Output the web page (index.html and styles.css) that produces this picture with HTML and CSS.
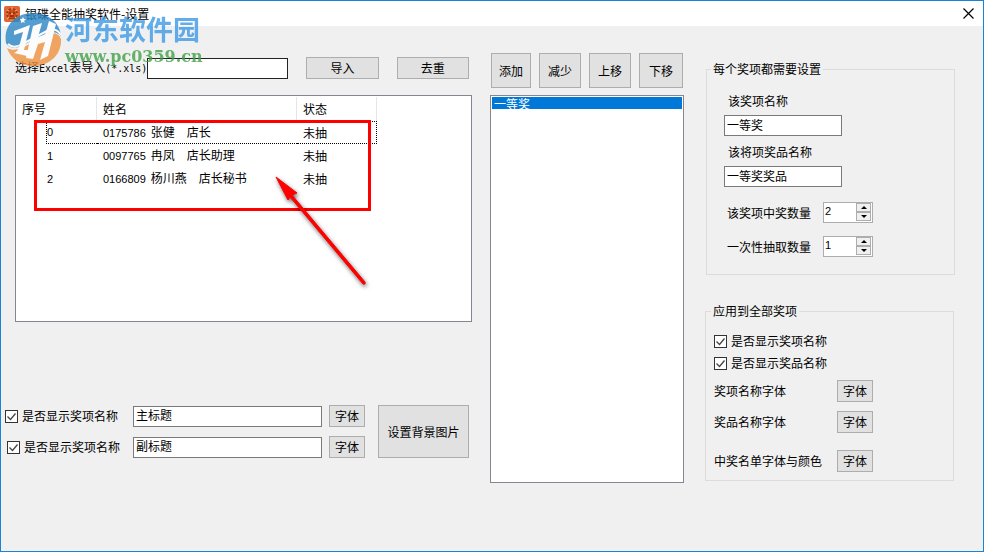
FILE: index.html
```html
<!DOCTYPE html>
<html lang="zh-CN">
  <head>
    <meta charset="UTF-8" />
    <meta name="viewport" content="width=device-width, initial-scale=1.0" />
    <title>银碟全能抽奖软件-设置</title>
    <link rel="stylesheet" href="styles.css">
  </head>
  <body>
    <div class="window">
      <header class="titlebar">
        <svg class="app-icon" viewBox="0 0 16 16" aria-hidden="true">
          <rect width="16" height="16" rx="2" fill="#e2643a" />
          <circle cx="8" cy="8" r="6" fill="#a03a18" />
          <circle cx="8" cy="8" r="4" fill="#d9481c" />
          <path d="M3 4l2 1M13 4l-2 1M2 8h2M12 8h2M3 13l2-2M13 13l-2-2M8 1v3M6 14h4" stroke="#f6b04c" stroke-width="1.2" />
          <path d="M5 7h2M9 7h2M6 10h4" stroke="#5b2410" stroke-width="1.2" />
          <path d="M8 7v2" stroke="#ffd27a" />
        </svg>
        <h1>银碟全能抽奖软件-设置</h1>
        <button class="close" type="button" aria-label="关闭">
          <svg viewBox="0 0 11 11" aria-hidden="true">
            <path d="M.5 .5l10 10M10.5 .5l-10 10" stroke="#000" stroke-width="1.2" />
          </svg>
        </button>
      </header>

      <div class="watermark">
        <svg class="watermark-logo" viewBox="0 0 57 54" aria-hidden="true">
          <path d="M1 31C-2 13 11 1 28 1c16 0 27 10 28 23-4-4-9-5-14-3L14 35C8 37 3 35 1 31z" fill="#2b87c8" />
          <path d="M2 36c5 3 11 2 17-1l22-12c7-3 13-2 15 4 1 15-11 27-28 27C16 54 6 47 2 36z" fill="#f0923f" />
          <path d="M9 19l16-6-6 25h5l-2 6-13-3c3-1 4-3 5-6l4-15-9 3z" fill="#fff" />
          <path d="M28 14l9-3-4 14 7-2 4-14 7 3-8 32-8 4 5-18-7 2-5 15-7-1z" fill="#fff" />
          <path d="M3 32c5 5 11 2 16-1l23-12c6-3 11-1 14 4" fill="none" stroke="#fff" stroke-width="2" />
          <path d="M18 5l1 2h2l-2 2 1 2-2-1-2 1v-2l-1-2h2z" fill="#fff" />
        </svg>
        <div class="watermark-text">
          <span class="watermark-name">河东软件园</span>
          <span class="watermark-url">www.pc0359.cn</span>
        </div>
      </div>

      <main class="content">
        <section class="people">
          <div class="import-row">
            <label for="file">选择<span class="mono">Excel</span>表导入<span class="mono">(*.xls)</span></label>
            <input id="file" class="file" type="text">
            <button type="button">导入</button>
            <button type="button">去重</button>
          </div>

          <div class="list">
            <table>
              <thead>
                <tr>
                  <th class="col-no">序号</th>
                  <th class="col-name">姓名</th>
                  <th class="col-state">状态</th>
                </tr>
              </thead>
              <tbody>
                <tr class="focused">
                  <td><span class="num">0</span></td>
                  <td><span class="num">0175786</span>张健　店长</td>
                  <td>未抽</td>
                </tr>
                <tr>
                  <td><span class="num">1</span></td>
                  <td><span class="num">0097765</span>冉凤　店长助理</td>
                  <td>未抽</td>
                </tr>
                <tr>
                  <td><span class="num">2</span></td>
                  <td><span class="num">0166809</span>杨川燕　店长秘书</td>
                  <td>未抽</td>
                </tr>
              </tbody>
            </table>
            <div class="mark-box"></div>
            <svg class="mark-arrow" viewBox="0 0 100 120" aria-hidden="true">
              <path d="M4 4L25 20L20 22L93 109Q94 112 91 111L18 24L16 27z" fill="#f00" stroke="#f00" />
            </svg>
          </div>

          <div class="titles">
            <label class="check"><input type="checkbox" checked>是否显示奖项名称</label>
            <input type="text" value="主标题" aria-label="主标题">
            <button type="button">字体</button>
            <label class="check second"><input type="checkbox" checked>是否显示奖项名称</label>
            <input type="text" value="副标题" aria-label="副标题">
            <button type="button">字体</button>
            <button class="background" type="button">设置背景图片</button>
          </div>
        </section>

        <section class="prizes">
          <div class="prize-buttons">
            <button type="button">添加</button>
            <button type="button">减少</button>
            <button type="button">上移</button>
            <button type="button">下移</button>
          </div>
          <select class="prize-list" size="20" aria-label="奖项">
            <option selected>一等奖</option>
          </select>
        </section>

        <section class="settings">
          <fieldset class="each">
            <legend>每个奖项都需要设置</legend>
            <div class="field">
              <label for="prize">该奖项名称</label>
              <input id="prize" type="text" value="一等奖">
            </div>
            <div class="field">
              <label for="gift">该将项奖品名称</label>
              <input id="gift" type="text" value="一等奖奖品">
            </div>
            <div class="counts">
              <label for="total">该奖项中奖数量</label>
              <div class="spin">
                <input id="total" type="number" value="2">
                <div class="spin-buttons">
                  <button class="up" type="button" aria-label="增加"></button>
                  <button class="down" type="button" aria-label="减少"></button>
                </div>
              </div>
              <label for="once">一次性抽取数量</label>
              <div class="spin">
                <input id="once" type="number" value="1">
                <div class="spin-buttons">
                  <button class="up" type="button" aria-label="增加"></button>
                  <button class="down" type="button" aria-label="减少"></button>
                </div>
              </div>
            </div>
          </fieldset>

          <fieldset class="all">
            <legend>应用到全部奖项</legend>
            <label class="check"><input type="checkbox" checked>是否显示奖项名称</label>
            <label class="check"><input type="checkbox" checked>是否显示奖品名称</label>
            <div class="fonts">
              <span>奖项名称字体</span>
              <button type="button">字体</button>
              <span>奖品名称字体</span>
              <button type="button">字体</button>
            </div>
            <div class="fonts">
              <span>中奖名单字体与颜色</span>
              <button type="button">字体</button>
            </div>
          </fieldset>
        </section>
      </main>
    </div>
  </body>
</html>
```

FILE: styles.css
```css
* {
  box-sizing: border-box;
}
body {
  margin: 0;
  color: #000;
  font: normal 12px/14px "Noto Sans CJK SC", sans-serif;
}
button,
input,
select {
  margin: 0;
  color: #000;
  font: inherit;
}
button {
  padding: 0;
  border: 1px solid #adadad;
  background: #e1e1e1;
}
input[type="text"] {
  min-width: 0;
  height: 21px;
  padding: 0 2px 3px;
  border: 1px solid #7a7a7a;
  background: #fff;
}
.window {
  position: relative;
  min-height: 100vh;
  border: 1px solid #1883d7;
  background: #f0f0f0;
}

/* Title bar */
.titlebar {
  display: flex;
  align-items: center;
  height: 25px;
  padding: 0 9px 0 3px;
  background: #fff;
}
.titlebar h1 {
  flex: 1;
  margin: 0 0 0 5px;
  font-size: 12px;
  font-weight: normal;
}
.app-icon {
  width: 16px;
  height: 16px;
}
.close {
  display: flex;
  border: 0;
  background: none;
}
.close svg {
  width: 11px;
  height: 11px;
}

/* Watermark */
.watermark {
  position: absolute;
  top: 11px;
  left: 4px;
  display: flex;
  gap: 3px;
  opacity: 0.8;
  pointer-events: none;
}
.watermark-logo {
  width: 57px;
  height: 54px;
}
.watermark-text {
  display: flex;
  flex-direction: column;
}
.watermark-name {
  color: #3d9be6;
  font-size: 27px;
  font-weight: bold;
  line-height: 34px;
}
.watermark-url {
  color: #43a047;
  font: bold 16px/22px "DejaVu Serif", serif;
}

/* Columns */
.content {
  display: grid;
  grid-template-columns: 467fr 194fr 253fr;
  gap: 18px;
  align-items: start;
  padding: 27px 28px 20px 4px;
}

/* People */
.import-row {
  display: flex;
  align-items: center;
  gap: 18px;
  padding: 4px 3px 0 10px;
}
.import-row label {
  margin-right: -18px;
  white-space: nowrap;
}
.import-row .file {
  flex: 140;
  border-color: #222;
}
.import-row button {
  flex: 73;
  height: 22px;
}
.mono {
  font: 10px/14px "DejaVu Sans Mono", monospace;
}
.list {
  position: relative;
  height: 227px;
  margin: 16px 0 83px 10px;
  padding-top: 1px;
  border: 1px solid #828790;
  background: #fff;
}
.list table {
  table-layout: fixed;
  border-collapse: separate;
  border-spacing: 0;
  width: 361px;
}
.list th,
.list td {
  height: 23px;
  padding: 0 0 0 6px;
  font-weight: normal;
  text-align: left;
  white-space: nowrap;
}
.list th {
  height: 24px;
  border-right: 1px solid #e5e5e5;
}
.list td:first-child {
  padding-left: 31px;
}
.list .focused td {
  border-top: 1px dotted #000;
  border-bottom: 1px dotted #000;
}
.list .focused td:first-child {
  border: 0;
  padding-left: 30px;
}
.list .focused td:first-child .num {
  display: block;
  border: 1px dotted #000;
  border-right: 0;
  line-height: 21px;
}
.list .focused td:last-child {
  border-right: 1px dotted #000;
}
.col-no {
  width: 81px;
}
.col-name {
  width: 200px;
}
.col-state {
  width: 80px;
}
.num {
  margin-right: 5px;
  font: 11px/14px "Liberation Sans", sans-serif;
}
td:first-child .num {
  margin-right: 0;
}
.mark-box {
  position: absolute;
  top: 24px;
  left: 18px;
  width: 337px;
  height: 91px;
  border: 3px solid #f00;
}
.mark-arrow {
  position: absolute;
  top: 77px;
  left: 256px;
  width: 100px;
  height: 120px;
  filter: drop-shadow(1px 2px 2px rgba(0, 0, 0, 0.6));
}
.titles {
  display: grid;
  grid-template-columns: 121px 189fr 36px 97px;
  gap: 9px 7px;
  align-items: center;
  padding-right: 3px;
}
.titles button {
  height: 22px;
}
.titles .second {
  padding-left: 2px;
}
.titles .background {
  grid-area: 1 / 4 / 3 / 5;
  height: auto;
  margin-left: 6px;
  align-self: stretch;
}
.check {
  display: flex;
  align-items: center;
  gap: 4px;
  white-space: nowrap;
}
.check input {
  flex: none;
  width: 13px;
  height: 13px;
  border: 1px solid #333;
  background: #fff;
  appearance: none;
}
.check input:checked {
  background: #fff url("data:image/svg+xml,%3Csvg xmlns='http://www.w3.org/2000/svg' viewBox='0 0 11 11'%3E%3Cpath d='M1.5 5.5l3 3 5-6' fill='none' stroke='%23444' stroke-width='1.3'/%3E%3C/svg%3E");
}

/* Prizes */
.prize-buttons {
  display: grid;
  grid-template-columns: 40fr 42fr 42fr 44fr;
  gap: 8px;
  padding: 0 1px;
}
.prize-buttons button {
  height: 35px;
}
.prize-list {
  display: block;
  width: 100%;
  height: 388px;
  margin-top: 7px;
  padding: 1px;
  border: 1px solid #828790;
  border-radius: 0;
  background: #fff;
  overflow: hidden;
}
.prize-list option {
  display: flex;
  align-items: center;
  min-height: 12px;
  height: 12px;
  padding: 0 2px;
  line-height: 12px;
}
.prize-list option:checked {
  background: linear-gradient(#0078d7, #0078d7);
  -webkit-text-fill-color: #fff;
}

/* Settings */
.settings {
  padding: 9px 0 0 4px;
}
fieldset {
  min-width: 0;
  margin: 0;
  border: 1px solid #dcdcdc;
}
legend {
  padding: 0 2px;
}
.each {
  padding: 18px 17px 17px;
}
.each legend {
  margin-left: -13px;
}
.field {
  display: flex;
  flex-direction: column;
  gap: 7px;
  width: 118px;
  margin-bottom: 9px;
}
.field label {
  padding-left: 4px;
}
.counts {
  display: grid;
  grid-template-columns: 84px 50px;
  gap: 13px 12px;
  align-items: center;
  padding: 6px 0 0 3px;
}
.spin {
  display: flex;
  height: 21px;
  border: 1px solid #abadb3;
  background: #fff;
}
.spin input {
  flex: 1;
  min-width: 0;
  padding: 0 1px 3px;
  border: 0;
  background: none;
  font: 11px/14px "Liberation Sans", sans-serif;
  appearance: textfield;
}
.spin-buttons {
  display: flex;
  flex-direction: column;
  width: 15px;
  height: 18px;
  margin-right: 1px;
}
.spin-buttons button {
  display: flex;
  flex: 1;
  align-items: center;
  justify-content: center;
  background: #f0f0f0;
}
.spin-buttons button::before {
  border: 3px solid transparent;
  content: "";
}
.spin-buttons .up::before {
  border-top: 0;
  border-bottom-color: #000;
}
.spin-buttons .down::before {
  border-bottom: 0;
  border-top-color: #000;
}
.all {
  margin: 29px 1px 0 -1px;
  padding: 12px 8px 8px;
}
.all legend {
  margin-left: -3px;
}
.all .check {
  height: 22px;
}
.fonts {
  display: grid;
  grid-template-columns: 123px 36px;
  gap: 9px 0;
  align-items: center;
  margin-top: 6px;
}
.fonts + .fonts {
  margin-top: 17px;
}
.fonts button {
  height: 22px;
}
```
